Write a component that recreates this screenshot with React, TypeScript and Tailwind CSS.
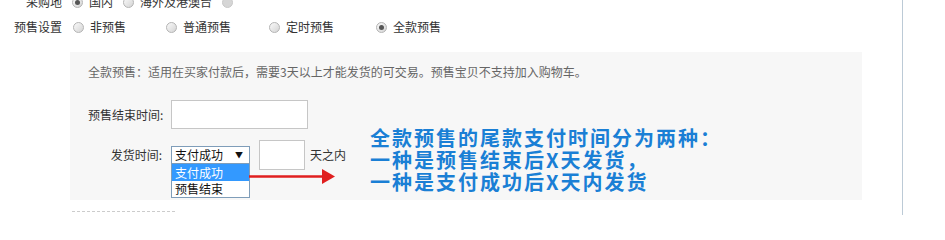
import React from "react";

function Radio({ checked = false, disabled = false }: { checked?: boolean; disabled?: boolean }) {
  if (disabled) {
    return <span className="w-[11px] h-[11px] shrink-0 rounded-full border border-[#c8c8c8] bg-[#d6d6d6]" />;
  }
  return (
    <span className="w-[11px] h-[11px] shrink-0 rounded-full border border-[#b4b4b4] bg-linear-to-br from-[#fafafa] to-[#d4d4d4] flex items-center justify-center">
      {checked ? <span className="w-[5px] h-[5px] rounded-full bg-[#555]" /> : null}
    </span>
  );
}

function Option({ label, checked, disabled, w }: { label?: string; checked?: boolean; disabled?: boolean; w: string }) {
  return (
    <div className={`flex items-center ${w}`}>
      <Radio checked={checked} disabled={disabled} />
      {label ? <span className="ml-[6px] whitespace-nowrap">{label}</span> : null}
    </div>
  );
}

export default function App() {
  return (
    <div
      className="w-[945px] h-[215px] overflow-hidden bg-white flex text-[12px] text-[#333]"
      style={{ fontFamily: '"Noto Sans CJK SC", "Noto Sans", sans-serif' }}
    >
      <div className="w-[902px] shrink-0 flex flex-col">
        {/* Row 1 */}
        <div className="flex items-center h-[18px] -mt-[7px] leading-[18px]">
          <span className="w-[62px] text-right">采购地</span>
          <div className="ml-[10px] flex items-center">
            <Option w="w-[51px]" label="国内" checked />
            <Option w="w-[99px]" label="海外及港澳台" />
            <Option w="w-[20px]" disabled />
          </div>
        </div>

        {/* Row 2 */}
        <div className="flex items-center h-[18px] mt-[7px] leading-[18px]">
          <span className="w-[62px] text-right">预售设置</span>
          <div className="ml-[11px] flex items-center">
            <Option w="w-[93px]" label="非预售" />
            <Option w="w-[103px]" label="普通预售" />
            <Option w="w-[107px]" label="定时预售" />
            <Option w="w-[80px]" label="全款预售" checked />
          </div>
        </div>

        {/* Panel */}
        <div className="ml-[70px] mt-[16px] w-[792px] h-[148px] shrink-0 bg-[#f7f7f7] pl-[18px] relative">
          <div className="pt-[11px] leading-[18px] text-[#666] whitespace-nowrap">
            全款预售：适用在买家付款后，需要3天以上才能发货的可交易。预售宝贝不支持加入购物车。
          </div>

          <div className="flex items-center mt-[19px] h-[29px]">
            <span className="w-[74px] text-right whitespace-nowrap">预售结束时间:</span>
            <div className="ml-[9px] w-[137px] h-[29px] border border-[#c6c6c6] bg-white" />
          </div>

          <div className="flex items-center mt-[11px] h-[30px]">
            <span className="w-[74px] text-right whitespace-nowrap">发货时间:</span>
            <div className="ml-[9px] w-[79px] h-[18px] relative">
              <div className="w-full h-full border border-[#7f9db9] bg-white flex items-center justify-between pl-[3px] pr-[6px] leading-[16px] text-[#111]">
                <span>支付成功</span>
                <span className="text-[8px]">▼</span>
              </div>
              <div className="absolute left-0 top-[18px] w-[79px] border border-[#7f9db9] border-t-0 bg-white z-10 leading-[16px]">
                <div className="h-[17px] bg-[#3399ff] text-white pl-[3px] flex items-center">支付成功</div>
                <div className="h-[16px] text-[#111] pl-[3px] flex items-center">预售结束</div>
              </div>
              <svg className="absolute left-[78px] top-[22px] z-20" width="88" height="16" viewBox="0 0 88 16">
                <line x1="0" y1="8.5" x2="76" y2="8.5" stroke="#e01f1f" strokeWidth="2.5" />
                <polygon points="73,1 86,8.5 73,16" fill="#e01f1f" />
              </svg>
            </div>
            <div className="ml-[9px] w-[46px] h-[30px] border border-[#c6c6c6] bg-white" />
            <span className="ml-[5px] whitespace-nowrap">天之内</span>
          </div>

          <div className="absolute left-[300px] top-[75px] text-[20px] leading-[22px] tracking-[2px] font-bold text-[#1a7fd5] whitespace-nowrap">
            <div>全款预售的尾款支付时间分为两种：</div>
            <div>一种是预售结束后X天发货，</div>
            <div>一种是支付成功后X天内发货</div>
          </div>
        </div>

        <div className="ml-[72px] mt-[11px] w-[103px] border-t border-dashed border-[#cccccc]" />
      </div>
      <div className="w-px h-full bg-[#bccad6]" />
    </div>
  );
}
